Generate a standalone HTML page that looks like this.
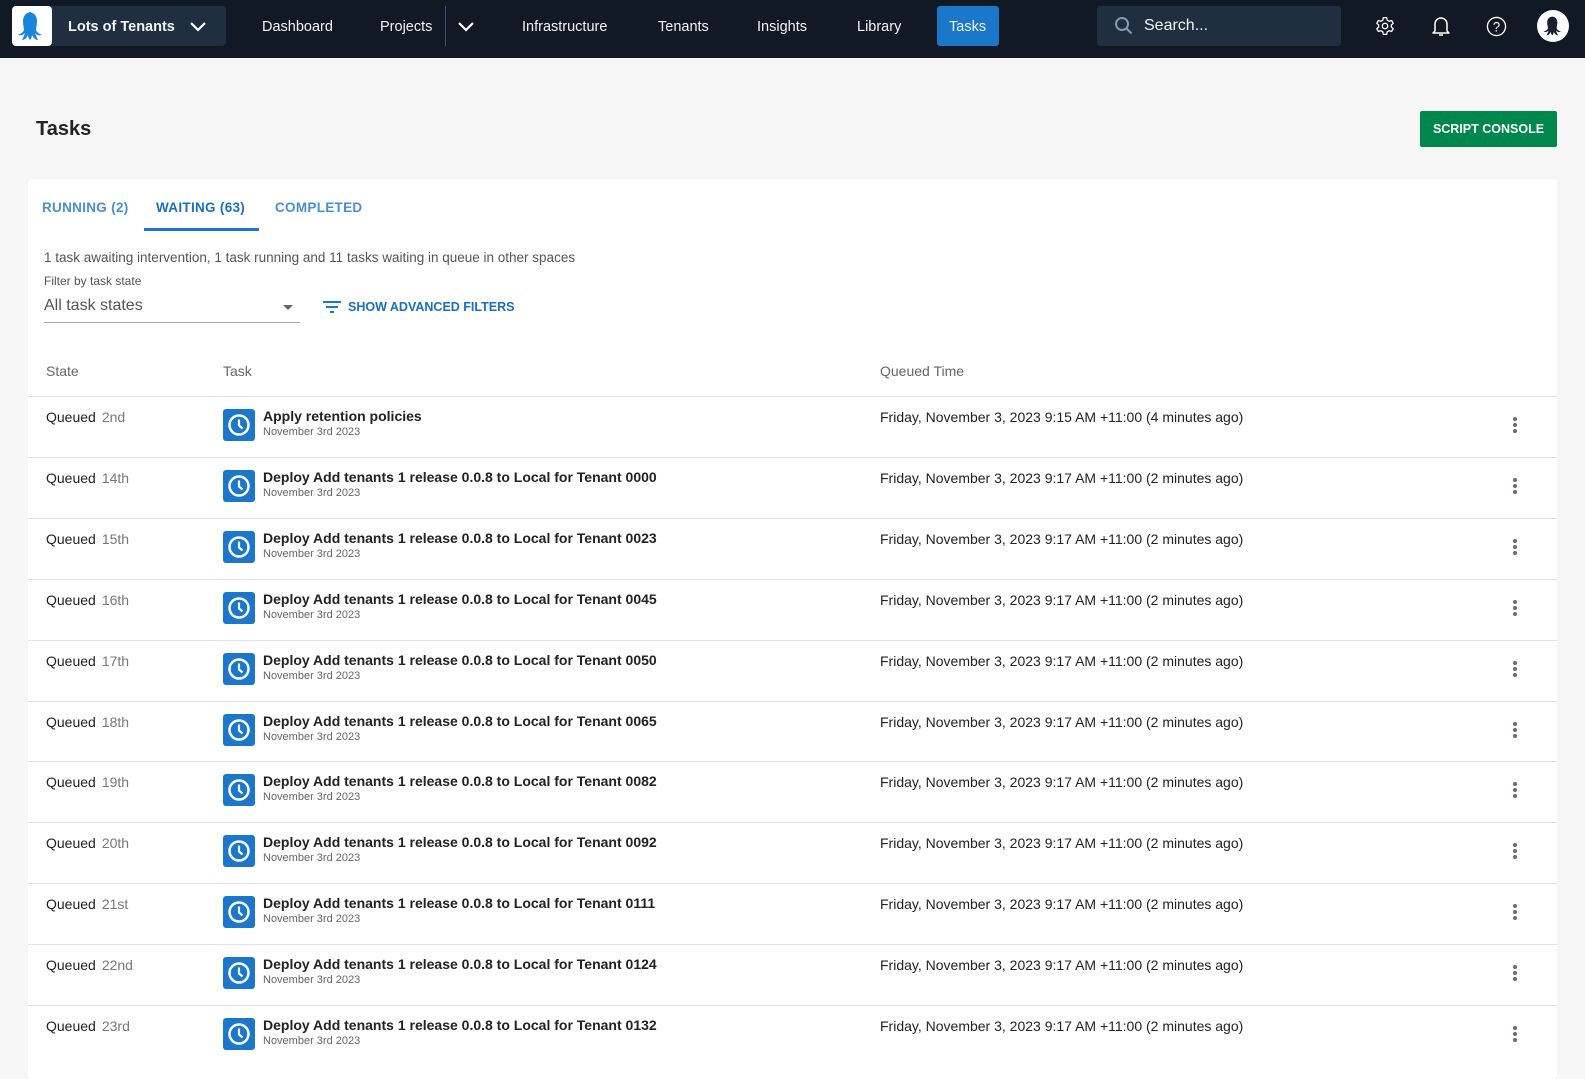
<!DOCTYPE html>
<html><head><meta charset="utf-8"><style>
*{box-sizing:border-box;margin:0;padding:0}
body{width:1585px;height:1064px;overflow:hidden;background:#f6f6f6;font-family:"Liberation Sans",Arial,sans-serif;position:relative;color:#1f1f1f}
.a{position:absolute;white-space:nowrap}
.nav{position:absolute;left:0;top:0;width:1585px;height:58px;background:#111a24}
.nt{color:#f2f4f8;font-size:14.5px;top:19px}
.card{position:absolute;left:28px;top:179px;width:1529px;height:900px;background:#fff;border-radius:4px}
.row{position:absolute;left:28px;width:1529px;height:61px;border-top:1px solid #e2e2e2}
.st{left:18px;top:12px;font-size:14px;color:#222}
.st span{color:#777;margin-left:6px}
.ic{left:195px;top:12px;width:32px;height:32px;background:#1a77ca;border-radius:3px}
.ti{left:235px;top:11px;font-size:14px;font-weight:bold;color:#222}
.dt{left:235px;top:29px;font-size:11px;color:#666}
.qt{left:852px;top:12px;font-size:14px;color:#222}
.dots{left:1485px;top:20px;width:4px}
.dots i{display:block;width:4px;height:4px;border-radius:2px;background:#6f6875;margin-bottom:2px}
</style></head><body>
<div class="nav"></div>
<div class="a" style="left:12px;top:6px;width:214px;height:40px;background:#1f2f40;border-radius:4px"></div>
<div class="a" style="left:12px;top:6px;width:40px;height:40px;background:#fff;border-radius:4px"></div>
<svg class="a" style="left:14px;top:8px" width="36" height="36" viewBox="0 0 36 36"><path d="M18 4c-6 0-9 4-9 9 0 4 1 7 1 9-1 3-4 4-6 5 3 1 5 0 7-2-1 3-2 5-3 7 3 0 5-3 6-5 0 2 1 4 2 5 1-1 2-3 2-5 1 2 3 5 6 5-1-2-2-4-3-7 2 2 4 3 7 2-2-1-5-2-6-5 0-2 1-5 1-9 0-5-3-9-9-9z" fill="#1a84d9"/></svg>
<div class="a nt" style="left:68px;font-weight:bold">Lots of Tenants</div>
<svg class="a" style="left:189px;top:20px" width="18" height="12" viewBox="0 0 18 12"><path d="M2 3l7 7 7-7" stroke="#fff" stroke-width="2.2" fill="none"/></svg>
<div class="a nt" style="left:262px">Dashboard</div>
<div class="a nt" style="left:380px">Projects</div>
<div class="a" style="left:445px;top:6px;width:1px;height:40px;background:#3b4a7a"></div>
<svg class="a" style="left:457px;top:20px" width="18" height="12" viewBox="0 0 18 12"><path d="M2 3l7 7 7-7" stroke="#fff" stroke-width="2.2" fill="none"/></svg>
<div class="a nt" style="left:522px">Infrastructure</div>
<div class="a nt" style="left:658px">Tenants</div>
<div class="a nt" style="left:757px">Insights</div>
<div class="a nt" style="left:857px">Library</div>
<div class="a" style="left:937px;top:6px;width:62px;height:40px;background:#1a77ca;border-radius:3px"></div>
<div class="a nt" style="left:949px">Tasks</div>
<div class="a" style="left:1097px;top:6px;width:244px;height:40px;background:#1f2f40;border-radius:3px"></div>
<svg class="a" style="left:1114px;top:16px" width="20" height="20" viewBox="0 0 20 20"><circle cx="8" cy="8" r="6" stroke="#8499b5" stroke-width="2" fill="none"/><path d="M12.5 12.5l5 5" stroke="#8499b5" stroke-width="2"/></svg>
<div class="a" style="left:1144px;top:17px;font-size:16px;color:#f2f4f8">Search...</div>
<svg class="a" style="left:1375px;top:16px" width="20" height="20" viewBox="0 0 24 24"><path d="M10 2h4l.6 3 2.4 1.4 2.9-1 2 3.4-2.3 2v2.4l2.3 2-2 3.4-2.9-1-2.4 1.4-.6 3h-4l-.6-3-2.4-1.4-2.9 1-2-3.4 2.3-2v-2.4l-2.3-2 2-3.4 2.9 1L9.4 5z" stroke="#fff" stroke-width="1.5" fill="none" stroke-linejoin="round"/><circle cx="12" cy="12" r="3.3" stroke="#fff" stroke-width="1.5" fill="none"/></svg>
<svg class="a" style="left:1431px;top:15px" width="20" height="22" viewBox="0 0 20 22"><path d="M4 16V9a6 6 0 0 1 12 0v7l2 2H2z" stroke="#fff" stroke-width="1.5" fill="none" stroke-linejoin="round"/><path d="M8 20h4" stroke="#fff" stroke-width="1.5"/></svg>
<svg class="a" style="left:1486px;top:16px" width="21" height="21" viewBox="0 0 22 22"><circle cx="11" cy="11" r="9.5" stroke="#fff" stroke-width="1.4" fill="none"/><text x="11" y="16" font-size="14" fill="#fff" text-anchor="middle" font-family="Liberation Sans">?</text></svg>
<div class="a" style="left:1537px;top:10px;width:32px;height:32px;border-radius:50%;background:#fff"></div>
<svg class="a" style="left:1540px;top:13px" width="26" height="26" viewBox="0 0 36 36"><path d="M18 5c-6 0-8 4-8 8 0 4 1 6 1 8-1 3-4 4-6 5 3 1 5 0 7-2-1 3-2 5-3 7 3 0 5-3 6-5 0 2 1 4 2 5 1-1 2-3 2-5 1 2 3 5 6 5-1-2-2-4-3-7 2 2 4 3 7 2-2-1-5-2-6-5 0-2 1-4 1-8 0-4-2-8-8-8z" fill="#17212c"/></svg>

<div class="a" style="left:36px;top:118px;font-size:20px;font-weight:bold;color:#222">Tasks</div>
<div class="a" style="left:1420px;top:111px;width:137px;height:36px;background:#00874d;border-radius:2px;color:#fff;font-size:12.5px;font-weight:bold;text-align:center;line-height:36px">SCRIPT CONSOLE</div>

<div class="card"></div>
<div class="a" style="left:42px;top:200px;font-size:13.5px;color:#4a90d0;font-weight:bold;letter-spacing:.3px">RUNNING (2)</div>
<div class="a" style="left:156px;top:200px;font-size:13.5px;color:#1a6fc0;font-weight:bold;letter-spacing:.3px">WAITING (63)</div>
<div class="a" style="left:275px;top:200px;font-size:13.5px;color:#4a90d0;font-weight:bold;letter-spacing:.3px">COMPLETED</div>
<div class="a" style="left:144px;top:228px;width:115px;height:3px;background:#1a77ca"></div>
<div class="a" style="left:44px;top:250px;font-size:13.5px;color:#555">1 task awaiting intervention, 1 task running and 11 tasks waiting in queue in other spaces</div>
<div class="a" style="left:44px;top:274px;font-size:12px;color:#555">Filter by task state</div>
<div class="a" style="left:44px;top:297px;font-size:16px;color:#555">All task states</div>
<svg class="a" style="left:283px;top:305px" width="10" height="6"><path d="M0 0h10L5 5z" fill="#666"/></svg>
<div class="a" style="left:44px;top:322px;width:256px;height:1px;background:#aaa"></div>
<svg class="a" style="left:322px;top:300px" width="20" height="14"><path d="M1 2h18M4 7h12M8 12h4" stroke="#1a77ca" stroke-width="2"/></svg>
<div class="a" style="left:348px;top:300px;font-size:12.5px;color:#1a6fc0;font-weight:bold">SHOW ADVANCED FILTERS</div>
<div class="a" style="left:46px;top:363px;font-size:14px;color:#666">State</div>
<div class="a" style="left:223px;top:363px;font-size:14px;color:#666">Task</div>
<div class="a" style="left:880px;top:363px;font-size:14px;color:#666">Queued Time</div>

<div class="row" style="top:396px"><div class="a st">Queued<span>2nd</span></div><div class="a ic"><svg width="32" height="32"><circle cx="16" cy="16" r="9.5" stroke="#fff" stroke-width="2.5" fill="none"/><path d="M16 10.5v6l3.5 3" stroke="#fff" stroke-width="2.2" fill="none"/></svg></div><div class="a ti">Apply retention policies</div><div class="a dt">November 3rd 2023</div><div class="a qt">Friday, November 3, 2023 9:15 AM +11:00 (4 minutes ago)</div><div class="a dots"><i></i><i></i><i></i></div></div>
<div class="row" style="top:457px"><div class="a st">Queued<span>14th</span></div><div class="a ic"><svg width="32" height="32"><circle cx="16" cy="16" r="9.5" stroke="#fff" stroke-width="2.5" fill="none"/><path d="M16 10.5v6l3.5 3" stroke="#fff" stroke-width="2.2" fill="none"/></svg></div><div class="a ti">Deploy Add tenants 1 release 0.0.8 to Local for Tenant 0000</div><div class="a dt">November 3rd 2023</div><div class="a qt">Friday, November 3, 2023 9:17 AM +11:00 (2 minutes ago)</div><div class="a dots"><i></i><i></i><i></i></div></div>
<div class="row" style="top:518px"><div class="a st">Queued<span>15th</span></div><div class="a ic"><svg width="32" height="32"><circle cx="16" cy="16" r="9.5" stroke="#fff" stroke-width="2.5" fill="none"/><path d="M16 10.5v6l3.5 3" stroke="#fff" stroke-width="2.2" fill="none"/></svg></div><div class="a ti">Deploy Add tenants 1 release 0.0.8 to Local for Tenant 0023</div><div class="a dt">November 3rd 2023</div><div class="a qt">Friday, November 3, 2023 9:17 AM +11:00 (2 minutes ago)</div><div class="a dots"><i></i><i></i><i></i></div></div>
<div class="row" style="top:579px"><div class="a st">Queued<span>16th</span></div><div class="a ic"><svg width="32" height="32"><circle cx="16" cy="16" r="9.5" stroke="#fff" stroke-width="2.5" fill="none"/><path d="M16 10.5v6l3.5 3" stroke="#fff" stroke-width="2.2" fill="none"/></svg></div><div class="a ti">Deploy Add tenants 1 release 0.0.8 to Local for Tenant 0045</div><div class="a dt">November 3rd 2023</div><div class="a qt">Friday, November 3, 2023 9:17 AM +11:00 (2 minutes ago)</div><div class="a dots"><i></i><i></i><i></i></div></div>
<div class="row" style="top:640px"><div class="a st">Queued<span>17th</span></div><div class="a ic"><svg width="32" height="32"><circle cx="16" cy="16" r="9.5" stroke="#fff" stroke-width="2.5" fill="none"/><path d="M16 10.5v6l3.5 3" stroke="#fff" stroke-width="2.2" fill="none"/></svg></div><div class="a ti">Deploy Add tenants 1 release 0.0.8 to Local for Tenant 0050</div><div class="a dt">November 3rd 2023</div><div class="a qt">Friday, November 3, 2023 9:17 AM +11:00 (2 minutes ago)</div><div class="a dots"><i></i><i></i><i></i></div></div>
<div class="row" style="top:701px"><div class="a st">Queued<span>18th</span></div><div class="a ic"><svg width="32" height="32"><circle cx="16" cy="16" r="9.5" stroke="#fff" stroke-width="2.5" fill="none"/><path d="M16 10.5v6l3.5 3" stroke="#fff" stroke-width="2.2" fill="none"/></svg></div><div class="a ti">Deploy Add tenants 1 release 0.0.8 to Local for Tenant 0065</div><div class="a dt">November 3rd 2023</div><div class="a qt">Friday, November 3, 2023 9:17 AM +11:00 (2 minutes ago)</div><div class="a dots"><i></i><i></i><i></i></div></div>
<div class="row" style="top:761px"><div class="a st">Queued<span>19th</span></div><div class="a ic"><svg width="32" height="32"><circle cx="16" cy="16" r="9.5" stroke="#fff" stroke-width="2.5" fill="none"/><path d="M16 10.5v6l3.5 3" stroke="#fff" stroke-width="2.2" fill="none"/></svg></div><div class="a ti">Deploy Add tenants 1 release 0.0.8 to Local for Tenant 0082</div><div class="a dt">November 3rd 2023</div><div class="a qt">Friday, November 3, 2023 9:17 AM +11:00 (2 minutes ago)</div><div class="a dots"><i></i><i></i><i></i></div></div>
<div class="row" style="top:822px"><div class="a st">Queued<span>20th</span></div><div class="a ic"><svg width="32" height="32"><circle cx="16" cy="16" r="9.5" stroke="#fff" stroke-width="2.5" fill="none"/><path d="M16 10.5v6l3.5 3" stroke="#fff" stroke-width="2.2" fill="none"/></svg></div><div class="a ti">Deploy Add tenants 1 release 0.0.8 to Local for Tenant 0092</div><div class="a dt">November 3rd 2023</div><div class="a qt">Friday, November 3, 2023 9:17 AM +11:00 (2 minutes ago)</div><div class="a dots"><i></i><i></i><i></i></div></div>
<div class="row" style="top:883px"><div class="a st">Queued<span>21st</span></div><div class="a ic"><svg width="32" height="32"><circle cx="16" cy="16" r="9.5" stroke="#fff" stroke-width="2.5" fill="none"/><path d="M16 10.5v6l3.5 3" stroke="#fff" stroke-width="2.2" fill="none"/></svg></div><div class="a ti">Deploy Add tenants 1 release 0.0.8 to Local for Tenant 0111</div><div class="a dt">November 3rd 2023</div><div class="a qt">Friday, November 3, 2023 9:17 AM +11:00 (2 minutes ago)</div><div class="a dots"><i></i><i></i><i></i></div></div>
<div class="row" style="top:944px"><div class="a st">Queued<span>22nd</span></div><div class="a ic"><svg width="32" height="32"><circle cx="16" cy="16" r="9.5" stroke="#fff" stroke-width="2.5" fill="none"/><path d="M16 10.5v6l3.5 3" stroke="#fff" stroke-width="2.2" fill="none"/></svg></div><div class="a ti">Deploy Add tenants 1 release 0.0.8 to Local for Tenant 0124</div><div class="a dt">November 3rd 2023</div><div class="a qt">Friday, November 3, 2023 9:17 AM +11:00 (2 minutes ago)</div><div class="a dots"><i></i><i></i><i></i></div></div>
<div class="row" style="top:1005px"><div class="a st">Queued<span>23rd</span></div><div class="a ic"><svg width="32" height="32"><circle cx="16" cy="16" r="9.5" stroke="#fff" stroke-width="2.5" fill="none"/><path d="M16 10.5v6l3.5 3" stroke="#fff" stroke-width="2.2" fill="none"/></svg></div><div class="a ti">Deploy Add tenants 1 release 0.0.8 to Local for Tenant 0132</div><div class="a dt">November 3rd 2023</div><div class="a qt">Friday, November 3, 2023 9:17 AM +11:00 (2 minutes ago)</div><div class="a dots"><i></i><i></i><i></i></div></div>
</body></html>
